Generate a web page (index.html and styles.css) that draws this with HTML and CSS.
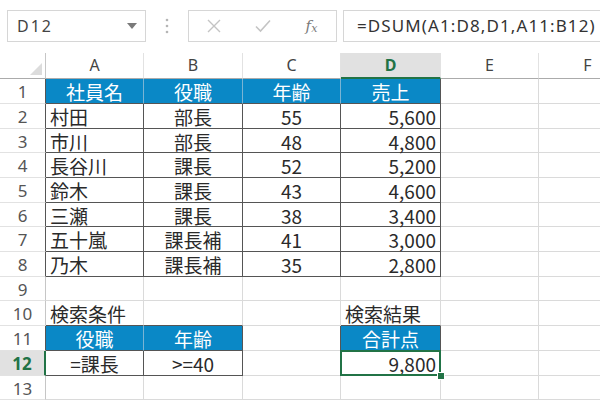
FILE: index.html
```html
<!DOCTYPE html>
<html lang="ja">
<head>
<meta charset="utf-8">
<link rel="stylesheet" href="styles.css">
</head>
<body>
<div class="bar">
  <div class="namebox"><span class="nb-text">D12</span><svg class="caret" width="10" height="6" viewBox="0 0 10 6"><path d="M0 0H10L5 6Z" fill="#7a7a7a"/></svg></div>
  <div class="dots"><svg width="4" height="16" viewBox="0 0 4 16"><circle cx="2" cy="2" r="1.3" fill="#b5b5b5"/><circle cx="2" cy="8" r="1.3" fill="#b5b5b5"/><circle cx="2" cy="14" r="1.3" fill="#b5b5b5"/></svg></div>
  <div class="tools">
    <span class="tool"><svg width="14" height="14" viewBox="0 0 14 14"><path d="M1 1L13 13M13 1L1 13" stroke="#c4c4c4" stroke-width="1.4" fill="none"/></svg></span>
    <span class="tool"><svg width="16" height="14" viewBox="0 0 16 14"><path d="M1 7.5L5.5 12L15 1.5" stroke="#c4c4c4" stroke-width="1.6" fill="none"/></svg></span>
    <span class="tool fx"><i>f</i><span class="x">x</span></span>
  </div>
  <div class="formula">=DSUM(A1:D8,D1,A11:B12)</div>
</div>
<div class="sheet">
  <div class="ch corner"><svg width="12" height="12" viewBox="0 0 12 12"><path d="M12 0V12H0Z" fill="#dcdcdc"/></svg></div>
  <div class="ch">A</div><div class="ch">B</div><div class="ch">C</div><div class="ch chsel">D</div><div class="ch">E</div><div class="ch">F</div>

  <div class="rh rht">1</div><div class="c h">社員名</div><div class="c h">役職</div><div class="c h">年齢</div><div class="c h hl">売上</div><div class="c"></div><div class="c"></div>
  <div class="rh rht">2</div><div class="c t l">村田</div><div class="c t m">部長</div><div class="c t m">55</div><div class="c t r">5,600</div><div class="c"></div><div class="c"></div>
  <div class="rh rht">3</div><div class="c t l">市川</div><div class="c t m">部長</div><div class="c t m">48</div><div class="c t r">4,800</div><div class="c"></div><div class="c"></div>
  <div class="rh rht">4</div><div class="c t l">長谷川</div><div class="c t m">課長</div><div class="c t m">52</div><div class="c t r">5,200</div><div class="c"></div><div class="c"></div>
  <div class="rh rht">5</div><div class="c t l">鈴木</div><div class="c t m">課長</div><div class="c t m">43</div><div class="c t r">4,600</div><div class="c"></div><div class="c"></div>
  <div class="rh rht">6</div><div class="c t l">三瀬</div><div class="c t m">課長</div><div class="c t m">38</div><div class="c t r">3,400</div><div class="c"></div><div class="c"></div>
  <div class="rh rht">7</div><div class="c t l">五十嵐</div><div class="c t m">課長補</div><div class="c t m">41</div><div class="c t r">3,000</div><div class="c"></div><div class="c"></div>
  <div class="rh rht">8</div><div class="c t l">乃木</div><div class="c t m">課長補</div><div class="c t m">35</div><div class="c t r">2,800</div><div class="c"></div><div class="c"></div>
  <div class="rh">9</div><div class="c"></div><div class="c"></div><div class="c"></div><div class="c"></div><div class="c"></div><div class="c"></div>
  <div class="rh">10</div><div class="c l bb">検索条件</div><div class="c bb"></div><div class="c"></div><div class="c l bb">検索結果</div><div class="c"></div><div class="c"></div>
  <div class="rh rht">11</div><div class="c h">役職</div><div class="c h hl">年齢</div><div class="c rb"></div><div class="c h hl">合計点</div><div class="c"></div><div class="c"></div>
  <div class="rh rhsel">12</div><div class="c t m">=課長</div><div class="c t m">&gt;=40</div><div class="c rb"></div><div class="c t r sel">9,800</div><div class="c"></div><div class="c"></div>
  <div class="rh">13</div><div class="c"></div><div class="c"></div><div class="c"></div><div class="c"></div><div class="c"></div><div class="c"></div>
</div>
</body>
</html>
```
FILE: styles.css
```css
html, body {
  margin: 0;
  padding: 0;
  background: #ffffff;
}
body {
  width: 600px;
  height: 400px;
  overflow: hidden;
  font-family: "Noto Sans", "Noto Sans CJK JP", sans-serif;
}
.bar {
  height: 53px;
  box-sizing: border-box;
  padding-top: 10px;
  display: flex;
  align-items: flex-start;
  overflow: hidden;
  width: 600px;
}
.bar > * {
  flex: none;
}
.namebox {
  margin-left: 7px;
  width: 139px;
  height: 32px;
  box-sizing: border-box;
  border: 1px solid #d6d6d6;
  display: flex;
  align-items: center;
  justify-content: space-between;
  padding: 0 8px 0 9px;
}
.nb-text {
  font-size: 16px;
  color: #444;
  letter-spacing: 2px;
}
.dots {
  width: 42px;
  height: 32px;
  display: flex;
  align-items: center;
  justify-content: center;
}
.tools {
  width: 149px;
  height: 32px;
  box-sizing: border-box;
  border: 1px solid #d6d6d6;
  display: flex;
  align-items: center;
}
.tool {
  width: 49px;
  display: flex;
  justify-content: center;
  align-items: center;
}
.fx {
  font-family: "DejaVu Serif", "Liberation Serif", serif;
  color: #7a7a7a;
  font-size: 15px;
  font-style: italic;
}
.fx .x {
  font-style: italic;
  font-size: 11px;
  margin-top: 5px;
}
.formula {
  margin-left: 6px;
  width: 280px;
  height: 32px;
  box-sizing: border-box;
  border: 1px solid #d6d6d6;
  padding-left: 13px;
  font-size: 17px;
  line-height: 30px;
  color: #333;
  letter-spacing: 1.1px;
  white-space: nowrap;
}
.sheet {
  display: grid;
  grid-template-columns: 46px 98px 99px 98px 100px 98px 98px;
  grid-template-rows: 26.3px repeat(13, 24.7px);
  width: 600px;
  overflow: hidden;
}
.ch {
  box-sizing: border-box;
  border-right: 1px solid #e2e2e2;
  border-bottom: 1px solid #ababab;
  font-size: 16px;
  color: #444;
  text-align: center;
  line-height: 25px;
  background: #fff;
}
.corner {
  display: flex;
  align-items: flex-end;
  justify-content: flex-end;
  padding: 0 3px 3px 0;
  border-right: 1px solid #c6c6c6;
}
.chsel {
  background: #e1e1e1;
  color: #217346;
  font-weight: bold;
  border-bottom: 2px solid #217346;
}
.rh {
  box-sizing: border-box;
  border-right: 1px solid #c6c6c6;
  border-bottom: 1px solid #e2e2e2;
  font-size: 17px;
  color: #555;
  text-align: center;
  line-height: 25px;
}
.rht {
  border-right-color: #555;
}
.rhsel {
  background: #e1e1e1;
  color: #217346;
  font-weight: bold;
  border-right: 2px solid #217346;
}
.c {
  box-sizing: border-box;
  border-right: 1px solid #dadada;
  border-bottom: 1px solid #dadada;
  font-family: "Noto Sans CJK JP", sans-serif;
  font-size: 19px;
  line-height: 24px;
  color: #2a2a2a;
  white-space: nowrap;
  overflow: visible;
  padding: 1px 4px 0 4px;
}
.h {
  background: #0a88c6;
  color: #fff;
  text-align: center;
  border-right: 1px solid #7ab4d4;
  border-bottom: 1px solid #555;
}
.hl {
  border-right-color: #555;
}
.t {
  border-right: 1px solid #555;
  border-bottom: 1px solid #555;
}
.l { text-align: left; }
.m { text-align: center; }
.r { text-align: right; }
.bb { border-bottom: 1px solid #555; }
.rb { border-right: 1px solid #555; }
.sel {
  position: relative;
}
.sel::before {
  content: "";
  position: absolute;
  left: -1px;
  top: -1px;
  right: -1px;
  bottom: -1px;
  border: 2px solid #217346;
}
.sel::after {
  content: "";
  position: absolute;
  right: -5px;
  bottom: -5px;
  width: 6px;
  height: 6px;
  background: #217346;
  border: 1px solid #fff;
}
```
